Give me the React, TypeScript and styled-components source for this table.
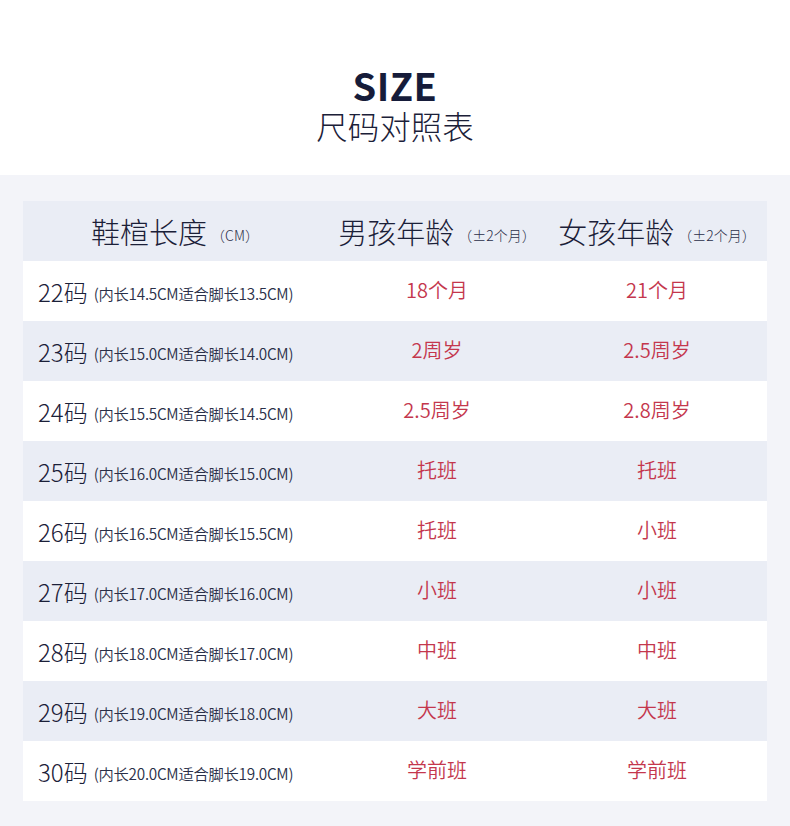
import React from "react";
import styled, { createGlobalStyle } from "styled-components";

const Global = createGlobalStyle`
  html, body { margin: 0; padding: 0; background: #ffffff; }
  body { font-family: "Noto Sans CJK SC", "Noto Sans", sans-serif; color: #1b2038; }
`;

const Page = styled.div`
  width: 790px;
  display: flex;
  flex-direction: column;
`;

const Hero = styled.header`
  height: 175px;
  background: #ffffff;
  display: flex;
  flex-direction: column;
  align-items: center;
  box-sizing: border-box;
  padding-top: 66px;
`;

const Title = styled.h1`
  margin: 0;
  font-family: "Noto Sans CJK SC", sans-serif;
  font-weight: 700;
  font-size: 38px;
  line-height: 38px;
  color: #161c3a;
  letter-spacing: 0.5px;
`;

const Subtitle = styled.h2`
  margin: 2px 0 0;
  font-weight: 300;
  font-size: 31.5px;
  line-height: 38px;
  color: #1b2038;
`;

const Body = styled.section`
  background: #f3f4f9;
  padding: 26px 23px 25px;
`;

const Table = styled.div`
  display: grid;
  grid-template-columns: 304px 220px 220px;
`;

const Row = styled.div<{ $alt: boolean }>`
  display: contents;
  & > div { background: ${(p) => (p.$alt ? "#eaedf5" : "#ffffff")}; }
`;

const HeadCell = styled.div`
  height: 60px;
  display: flex;
  align-items: center;
  justify-content: center;
  background: #eaedf5;
  font-size: 29px;
  font-weight: 300;
  color: #1b2038;
  white-space: nowrap;
`;

const HeadNote = styled.span`
  font-size: 14px;
  font-weight: 300;
  margin-left: 4px;
  margin-top: 8px;
  color: #2a2f48;
`;

const SizeCell = styled.div`
  height: 60px;
  display: flex;
  align-items: center;
  padding-left: 15px;
  box-sizing: border-box;
  white-space: nowrap;
`;

const SizeMain = styled.span`
  font-size: 24px;
  font-weight: 300;
  color: #1b2038;
  letter-spacing: 0px;
`;

const SizeNote = styled.span`
  font-size: 15.3px;
  font-weight: 350;
  margin-left: 6px;
  margin-top: 4px;
  color: #2a2f48;
  letter-spacing: -0.25px;
`;

const AgeCell = styled.div`
  height: 60px;
  display: flex;
  align-items: center;
  justify-content: center;
  font-size: 20px;
  font-weight: 350;
  color: #c4374d;
  padding-bottom: 3px;
  box-sizing: border-box;
`;

const rows = [
  ["22", "14.5", "13.5", "18个月", "21个月"],
  ["23", "15.0", "14.0", "2周岁", "2.5周岁"],
  ["24", "15.5", "14.5", "2.5周岁", "2.8周岁"],
  ["25", "16.0", "15.0", "托班", "托班"],
  ["26", "16.5", "15.5", "托班", "小班"],
  ["27", "17.0", "16.0", "小班", "小班"],
  ["28", "18.0", "17.0", "中班", "中班"],
  ["29", "19.0", "18.0", "大班", "大班"],
  ["30", "20.0", "19.0", "学前班", "学前班"],
];

export default function App() {
  return (
    <Page>
      <Global />
      <Hero>
        <Title>SIZE</Title>
        <Subtitle>尺码对照表</Subtitle>
      </Hero>
      <Body>
        <Table>
          <HeadCell>
            鞋楦长度<HeadNote>（CM）</HeadNote>
          </HeadCell>
          <HeadCell>
            男孩年龄<HeadNote>（±2个月）</HeadNote>
          </HeadCell>
          <HeadCell>
            女孩年龄<HeadNote>（±2个月）</HeadNote>
          </HeadCell>
          {rows.map((r, i) => (
            <Row key={r[0]} $alt={i % 2 === 1}>
              <SizeCell>
                <SizeMain>{r[0]}码</SizeMain>
                <SizeNote>
                  (内长{r[1]}CM适合脚长{r[2]}CM)
                </SizeNote>
              </SizeCell>
              <AgeCell>{r[3]}</AgeCell>
              <AgeCell>{r[4]}</AgeCell>
            </Row>
          ))}
        </Table>
      </Body>
    </Page>
  );
}
